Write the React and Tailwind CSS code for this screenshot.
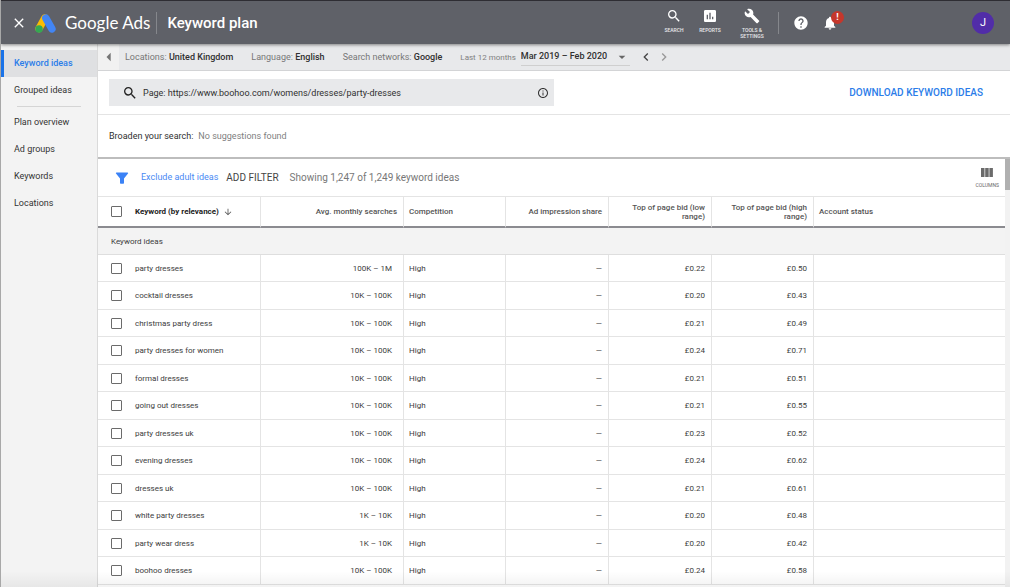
import React from "react";
import {
  MdArrowDownward,
  MdArrowDropDown,
  MdArrowLeft,
  MdAssessment,
  MdBuild,
  MdChevronLeft,
  MdChevronRight,
  MdClose,
  MdHelp,
  MdInfoOutline,
  MdNotifications,
  MdSearch,
} from "react-icons/md";

const rows = [
  ["party dresses", "100K – 1M", "£0.22", "£0.50"],
  ["cocktail dresses", "10K – 100K", "£0.20", "£0.43"],
  ["christmas party dress", "10K – 100K", "£0.21", "£0.49"],
  ["party dresses for women", "10K – 100K", "£0.24", "£0.71"],
  ["formal dresses", "10K – 100K", "£0.21", "£0.51"],
  ["going out dresses", "10K – 100K", "£0.21", "£0.55"],
  ["party dresses uk", "10K – 100K", "£0.23", "£0.52"],
  ["evening dresses", "10K – 100K", "£0.24", "£0.62"],
  ["dresses uk", "10K – 100K", "£0.21", "£0.61"],
  ["white party dresses", "1K – 10K", "£0.20", "£0.48"],
  ["party wear dress", "1K – 10K", "£0.20", "£0.42"],
  ["boohoo dresses", "10K – 100K", "£0.24", "£0.58"],
];

function AdsLogo() {
  return (
    <svg viewBox="0 0 62 56" className="h-[19px] w-[21px]" aria-hidden="true">
      <path d="M29 12 L12 43" stroke="#fbbc04" strokeWidth="22" strokeLinecap="round" />
      <path d="M32 12 L50 44" stroke="#4285f4" strokeWidth="22" strokeLinecap="round" />
      <circle cx="12" cy="44" r="11" fill="#34a853" />
    </svg>
  );
}

function Checkbox({ label }) {
  return (
    <input
      type="checkbox"
      aria-label={label}
      className="block size-[11px] appearance-none rounded-[1px] border border-[#6b6b6b] bg-white checked:bg-blue-500"
    />
  );
}

function HeaderTool({ icon: Icon, children }) {
  return (
    <button className="flex w-9 flex-col items-center text-[5px] leading-[6px] font-medium text-[#e8e8ea]">
      <Icon className="mb-[3px] size-4 text-white" />
      {children}
    </button>
  );
}

function Header() {
  return (
    <header className="relative z-10 flex h-11 shrink-0 items-center border-t border-[#2e2d33] bg-[#5f6168] pt-px text-white shadow-[0_1px_3px_rgba(0,0,0,0.45)]">
      <button aria-label="Close" className="ml-[10px]">
        <MdClose className="size-4" />
      </button>
      <a href="#" className="ml-2 flex items-center gap-[9px] font-[Lato,sans-serif] text-[17px]">
        <AdsLogo />
        <span>Google Ads</span>
      </a>
      <div className="mx-[6px] h-[22px] w-px bg-[#85878c]" />
      <h1 className="ml-1 text-[15px] font-medium">Keyword plan</h1>
      <div className="ml-auto flex items-center">
        <div className="flex items-start pt-px">
          <HeaderTool icon={MdSearch}>SEARCH</HeaderTool>
          <HeaderTool icon={MdAssessment}>REPORTS</HeaderTool>
          <div className="ml-[6px]">
            <HeaderTool icon={MdBuild}>
              <span>
                TOOLS &amp;
                <br />
                SETTINGS
              </span>
            </HeaderTool>
          </div>
        </div>
        <div className="ml-2 h-[22px] w-px bg-[#85878c]" />
        <button aria-label="Help" className="ml-[14px]">
          <MdHelp className="size-4" />
        </button>
        <button aria-label="Notifications" className="relative ml-[13px]">
          <MdNotifications className="size-4" />
          <span className="absolute -top-[4px] left-[9px] flex size-[13px] items-center justify-center rounded-full bg-[#c5372c] text-[9px] font-bold">
            !
          </span>
        </button>
        <button
          aria-label="Account"
          className="mr-4 ml-[134px] flex size-[22px] items-center justify-center rounded-full bg-[#512da8] text-[11px]"
        >
          J
        </button>
      </div>
    </header>
  );
}

function Sidebar() {
  const link = "flex h-[27px] items-center pl-[13px]";
  return (
    <nav className="w-[97px] shrink-0 border-r border-[#dadada] bg-[#f3f3f3] pt-[6px] text-[9px] text-[#333]">
      <a href="#" className="flex h-[27px] items-center border-l-3 border-[#1a73e8] bg-[#dfe0e2] pl-[10px] font-medium text-[#2b7de9]">
        Keyword ideas
      </a>
      <a href="#" className={link}>Grouped ideas</a>
      <hr className="mx-4 my-[2px] border-[#d5d5d5]" />
      <a href="#" className={link}>Plan overview</a>
      <a href="#" className={link}>Ad groups</a>
      <a href="#" className={link}>Keywords</a>
      <a href="#" className={link}>Locations</a>
    </nav>
  );
}

function Setting({ label, value }) {
  return (
    <button className="text-[#777]">
      {label} <span className="font-medium text-[#303030]">{value}</span>
    </button>
  );
}

function SettingsBar() {
  return (
    <div className="flex h-[27px] shrink-0 items-center border-b border-[#d3d4d6] bg-[#e8e9eb] text-[9px]">
      <button aria-label="Collapse navigation" className="flex h-full w-[21px] items-center justify-center bg-[#f1f1f1] text-[#757575]">
        <MdArrowLeft className="size-5" />
      </button>
      <div className="ml-[6px] flex items-center gap-[18px] pt-px">
        <Setting label="Locations:" value="United Kingdom" />
        <Setting label="Language:" value="English" />
        <Setting label="Search networks:" value="Google" />
        <div className="flex items-center">
          <label htmlFor="period" className="text-[8px] text-[#808080]">Last 12 months</label>
          <div className="ml-[5px] grid w-[109px] items-center border-b border-[#cfcfcf]">
            <select
              id="period"
              className="col-start-1 row-start-1 h-4 appearance-none text-[9px] font-medium text-[#303030]"
            >
              <option>Mar 2019 – Feb 2020</option>
            </select>
            <MdArrowDropDown className="pointer-events-none col-start-1 row-start-1 size-4 justify-self-end text-[#666]" />
          </div>
        </div>
      </div>
      <button aria-label="Previous period" className="ml-2">
        <MdChevronLeft className="size-4 text-[#444]" />
      </button>
      <button aria-label="Next period" className="ml-[2px]">
        <MdChevronRight className="size-4 text-[#999]" />
      </button>
    </div>
  );
}

function SearchPanel() {
  return (
    <section className="shrink-0 border-b-2 border-[#bdbdbd] text-[9px]">
      <div className="flex h-11 items-center justify-between border-b border-[#e4e4e4] pr-[27px] pl-[11px]">
        <div className="flex h-[27px] w-[445px] items-center bg-[#e8e9eb] pr-[5px] pl-[13px]">
          <MdSearch className="size-4 shrink-0 text-[#222]" />
          <input
            type="text"
            aria-label="Search keywords or page"
            defaultValue="Page: https://www.boohoo.com/womens/dresses/party-dresses"
            className="ml-[5px] h-[27px] min-w-0 flex-1 pt-px text-[#303030] outline-none"
          />
          <button aria-label="About this search">
            <MdInfoOutline className="size-3 text-[#333]" />
          </button>
        </div>
        <button className="text-[10px] font-medium text-[#2b7de9]">DOWNLOAD KEYWORD IDEAS</button>
      </div>
      <p className="flex h-[42px] items-center gap-[5px] pt-[2px] pl-[11px] text-[#303030]">
        Broaden your search: <span className="text-[#808080]">No suggestions found</span>
      </p>
    </section>
  );
}

function FilterBar() {
  return (
    <div className="flex h-[37px] items-center pr-[6px] pl-[17px]">
      <svg viewBox="0 0 14 14" className="size-[14px]" fill="#3b82f6" role="img" aria-label="Filter">
        <path d="M1.400 1.500h11.200a.6.6 0 0 1 .4 1L9 7.600V12a.7.7 0 0 1-.7.700H5.700A.7.700 0 0 1 5 12V7.600L1 2.500a.6.6 0 0 1 .4-1z" />
      </svg>
      <button className="ml-[12px] text-[9px] text-[#4a8af4]">Exclude adult ideas</button>
      <button className="ml-[8px] text-[10px] text-[#444]">ADD FILTER</button>
      <p className="ml-[11px] text-[10px] text-[#777]">Showing 1,247 of 1,249 keyword ideas</p>
      <button className="ml-auto flex flex-col items-center gap-[5px] text-[5px] leading-[6px] text-[#666]">
        <svg viewBox="0 0 12 9" className="h-[9px] w-3" fill="#6b6b6b" aria-hidden="true">
          <path d="M0 0h3.500v9H0zM4.200 0h3.500v9H4.200zM8.400 0h3.500v9H8.400z" />
        </svg>
        COLUMNS
      </button>
    </div>
  );
}

function KeywordTable() {
  const cell = "border-r border-[#e4e4e4] p-0 pr-[6px]";
  return (
    <table className="w-full table-fixed border-separate border-spacing-0 text-[8px] leading-[9px] text-[#3c3c3c]">
      <colgroup>
        <col className="w-[37px]" />
        <col className="w-[126px]" />
        <col className="w-[143px]" />
        <col className="w-[102px]" />
        <col className="w-[103px]" />
        <col className="w-[103px]" />
        <col className="w-[102px]" />
        <col />
      </colgroup>
      <thead className="text-[#555]">
        <tr className="h-8 *:border-t *:border-b-2 *:border-t-[#e4e4e4] *:border-b-[#8b8b90] *:font-medium">
          <th className="p-0 pl-[13px]">
            <Checkbox label="Select all keywords" />
          </th>
          <th className={`${cell} text-left text-[#222]`}>
            <span className="flex items-center gap-1 font-bold">
              Keyword (by relevance) <MdArrowDownward className="size-[10px] text-[#555]" />
            </span>
          </th>
          <th className={`${cell} text-right`}>Avg. monthly searches</th>
          <th className={`${cell} pl-[5px] text-left`}>Competition</th>
          <th className={`${cell} text-right`}>Ad impression share</th>
          <th className={`${cell} pl-4 text-right`}>Top of page bid (low range)</th>
          <th className={`${cell} pl-4 text-right`}>Top of page bid (high range)</th>
          <th className="p-0 pl-[5px] text-left">Account status</th>
        </tr>
      </thead>
      <tbody>
        <tr className="h-[27px] bg-[#f3f3f3]">
          <th colSpan={8} scope="rowgroup" className="border-b border-[#dedede] p-0 pl-[13px] text-left font-normal">
            Keyword ideas
          </th>
        </tr>
      </tbody>
      <tbody>
        {rows.map(([keyword, searches, low, high]) => (
          <tr key={keyword} className="h-[27px] *:border-b *:border-[#e4e4e4] even:h-[28px]">
            <td className="p-0 pl-[13px]">
              <Checkbox label={`Select ${keyword}`} />
            </td>
            <td className={cell}>{keyword}</td>
            <td className="border-r border-[#e4e4e4] p-0 pr-[11px] text-right">{searches}</td>
            <td className={`${cell} pl-[5px]`}>High</td>
            <td className={`${cell} text-right`}>—</td>
            <td className={`${cell} text-right`}>{low}</td>
            <td className={`${cell} text-right`}>{high}</td>
            <td className="p-0" />
          </tr>
        ))}
      </tbody>
    </table>
  );
}

export default function App() {
  return (
    <div className="relative flex h-screen flex-col overflow-hidden border-l border-[#a8a8a8] bg-white font-[Roboto,sans-serif]">
      <Header />
      <div className="flex min-h-0 flex-1">
        <Sidebar />
        <main className="flex min-w-0 flex-1 flex-col">
          <SettingsBar />
          <SearchPanel />
          <div className="flex min-h-0 flex-1">
            <div className="min-w-0 flex-1 overflow-hidden">
              <FilterBar />
              <KeywordTable />
            </div>
            <div className="w-[5px] shrink-0 bg-[#f2f2f2]">
              <div className="h-[31px] bg-[#b0b0b0]" />
            </div>
          </div>
        </main>
      </div>
      <div className="pointer-events-none absolute inset-x-0 bottom-0 h-4 bg-linear-to-b from-transparent to-black/5" />
    </div>
  );
}
